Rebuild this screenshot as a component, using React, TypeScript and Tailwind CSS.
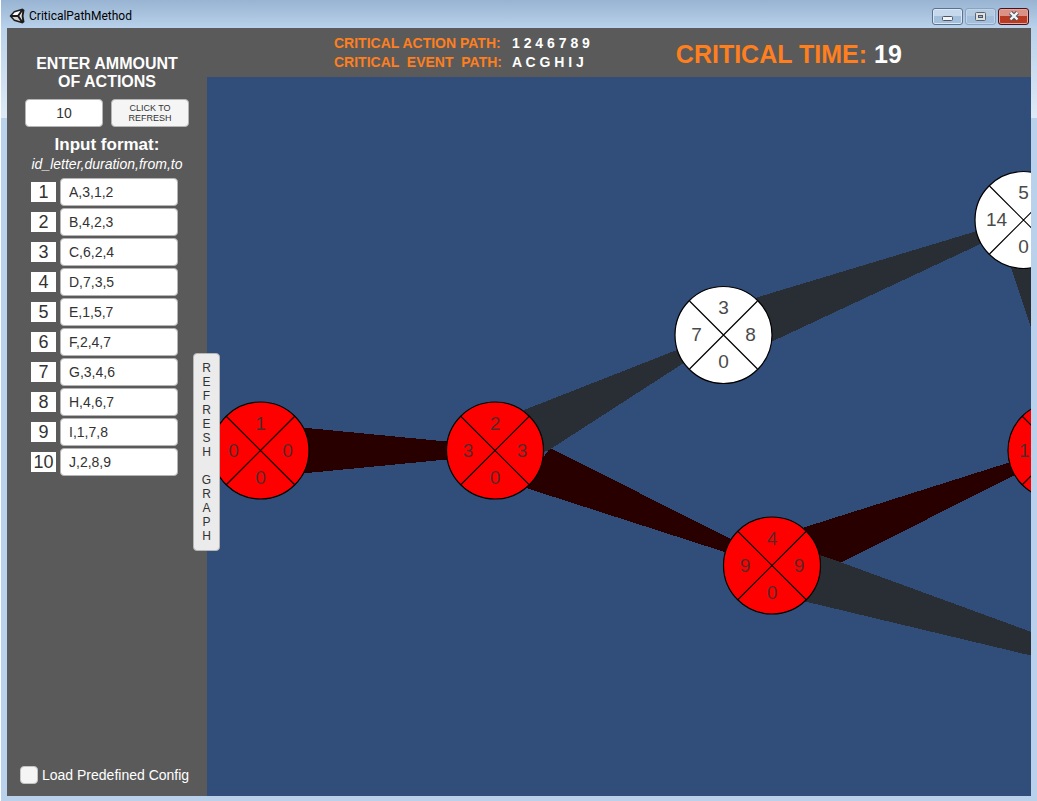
import React from "react";

type GraphNode = {
  id?: number;
  x: number;
  y: number;
  early: number;
  late?: number;
  slack?: number;
  critical: boolean;
};

const ACTIONS = [
  "A,3,1,2",
  "B,4,2,3",
  "C,6,2,4",
  "D,7,3,5",
  "E,1,5,7",
  "F,2,4,7",
  "G,3,4,6",
  "H,4,6,7",
  "I,1,7,8",
  "J,2,8,9",
];

const NODES: GraphNode[] = [
  { id: 1, x: 53.5, y: 373.5, early: 0, late: 0, slack: 0, critical: true },
  { id: 2, x: 288, y: 373.5, early: 3, late: 3, slack: 0, critical: true },
  { id: 3, x: 516.5, y: 258, early: 7, late: 8, slack: 0, critical: false },
  { id: 4, x: 565, y: 488.5, early: 9, late: 9, slack: 0, critical: true },
  { id: 5, x: 816.5, y: 143, early: 14, slack: 0, critical: false },
  { x: 849.5, y: 373.5, early: 12, critical: true },
];

const EDGES = [
  { points: "90,350 245,365 245,382 90,397", critical: true },
  { points: "343,371 530,465 530,479 316,410", critical: true },
  { points: "317,333 480,269 486,280 342,373 336,375", critical: false },
  { points: "548,221 780,151 782,163 564,265", critical: false },
  { points: "592,452 810,383 812,396 633,486 613,480", critical: true },
  { points: "610,477 633,485 830,557 830,580 596,524", critical: false },
  { points: "803,188 824,250 840,250 840,188", critical: false },
];

function EventNode({ node }: { node: GraphNode }) {
  const labels = [
    { dx: 0, dy: -27, value: node.id },
    { dx: -27, dy: 0, value: node.early },
    { dx: 27, dy: 0, value: node.late },
    { dx: 0, dy: 27, value: node.slack },
  ].filter((l) => l.value !== undefined);
  return (
    <g transform={`translate(${node.x} ${node.y})`}>
      <circle r="48.5" className={node.critical ? "fill-[#ff0000]" : "fill-white"} stroke="#000" strokeWidth="1.2" />
      <path d="M-34-34 34 34M34-34-34 34" stroke="#000" strokeWidth="1.2" />
      {labels.map((l, i) => (
        <text
          key={i}
          x={l.dx}
          y={l.dy + 6}
          textAnchor="middle"
          className={node.critical ? "fill-[#323232]/85 text-[19px]" : "fill-[#4a4a4a] text-[19px]"}
        >
          {l.value}
        </text>
      ))}
    </g>
  );
}

function TitleBar() {
  return (
    <header className="flex h-7 items-center justify-between bg-linear-to-b from-[#98b4d2] to-[#b9d1ea] px-2 pt-1">
      <div className="flex items-center gap-1">
        <svg width="16" height="16" viewBox="0 0 16 16" aria-hidden="true">
          <path d="M0.5 8 5 3 13.5 0.5 15.5 2 14.5 8 15.5 14 13.5 15.5 5 13Z" fill="#1c1c1c" />
          <path d="M5.5 4.6 11.5 2.8 8.6 7H3.4Z" fill="#fff" />
          <path d="M3.4 9H8.6L11.5 13.2 5.5 11.4Z" fill="#d4d4d4" />
          <path d="M13.3 3.6 12.6 8 13.3 12.4 10.3 8Z" fill="#e8e8e8" />
        </svg>
        <h1 className="font-[Roboto,sans-serif] text-[12px] leading-4 text-black">CriticalPathMethod</h1>
      </div>
      <div className="flex gap-0.5">
        <button
          type="button"
          aria-label="Minimize"
          className="flex h-[17px] w-[31px] items-center justify-center rounded-[3px] border border-[#5b7190] bg-linear-to-b from-[#c6d8ec] from-50% to-[#a4bfdb] to-50% inset-shadow-[0_0_0_1px_#dbe7f4]"
        >
          <svg width="11" height="5" viewBox="0 0 11 5" className="mt-1">
            <rect x="0.5" y="0.5" width="10" height="4" rx="1" fill="#f4f4f4" stroke="#4d5666" />
          </svg>
        </button>
        <button
          type="button"
          aria-label="Maximize"
          className="flex h-[17px] w-[31px] items-center justify-center rounded-[3px] border border-[#8aa3c1] bg-linear-to-b from-[#b4cae1] from-50% to-[#a4bfdb] to-50% inset-shadow-[0_0_0_1px_#c0d4ea]"
        >
          <svg width="11" height="9" viewBox="0 0 11 9">
            <rect x="0.5" y="0.5" width="10" height="8" rx="1" fill="#e0e0dc" stroke="#5a6474" />
            <rect x="3.5" y="3.5" width="4" height="2" fill="#8fb0d8" stroke="#4d5666" />
          </svg>
        </button>
        <button
          type="button"
          aria-label="Close"
          className="flex h-[17px] w-[31px] items-center justify-center rounded-[3px] border border-[#47121c] bg-linear-to-b from-[#dc9186] from-50% to-[#b93a22] to-50% inset-shadow-[0_0_0_1px_#e5a79c]"
        >
          <svg width="12" height="10" viewBox="0 0 12 10">
            <path d="M2.5 1.5 9.5 8.5M9.5 1.5 2.5 8.5" stroke="#4d5666" strokeWidth="4.4" />
            <path d="M2.5 1.5 9.5 8.5M9.5 1.5 2.5 8.5" stroke="#f4f4f4" strokeWidth="2.4" />
          </svg>
        </button>
      </div>
    </header>
  );
}

function Sidebar() {
  return (
    <aside className="flex w-[200px] shrink-0 flex-col bg-[#5a5a5a] pt-[27px] text-white">
      <label htmlFor="amount" className="text-center text-[16px] leading-[18px] font-bold">
        ENTER AMMOUNT
        <br />
        OF ACTIONS
      </label>
      <div className="mt-2 flex gap-2 px-[18px]">
        <input
          id="amount"
          type="text"
          defaultValue="10"
          className="h-7 w-0 flex-1 rounded-[4px] border border-[#b5b5b5] bg-white text-center text-[14px] text-[#323232]"
        />
        <button
          type="button"
          className="h-7 flex-1 rounded-[4px] border border-[#b5b5b5] bg-[#f5f5f5] text-[9px] leading-[10px] text-[#323232]"
        >
          CLICK TO
          <br />
          REFRESH
        </button>
      </div>
      <h2 className="mt-2 text-center text-[17px] leading-5 font-bold">Input format:</h2>
      <p className="text-center text-[14px] leading-[18px] italic">id_letter,duration,from,to</p>
      <ul className="mt-[5px] flex flex-col gap-0.5 pr-[29px] pl-6">
        {ACTIONS.map((action, i) => (
          <li key={action} className="flex items-center gap-1">
            <label
              htmlFor={`action-${i + 1}`}
              className="h-5 w-[25px] bg-white text-center text-[18px] leading-5 text-[#323232]"
            >
              {i + 1}
            </label>
            <input
              id={`action-${i + 1}`}
              type="text"
              defaultValue={action}
              className="h-7 w-0 flex-1 rounded-[4px] border border-[#b5b5b5] bg-white px-2 text-[14px] text-[#323232]"
            />
          </li>
        ))}
      </ul>
      <label className="mt-auto mb-3 ml-[13px] flex items-center gap-1 text-[14px] leading-[18px]">
        <input
          type="checkbox"
          className="size-[18px] appearance-none rounded-[4px] border border-[#c4c4c4] bg-[#f5f5f5] checked:bg-[#ff7f1e]"
        />
        Load Predefined Config
      </label>
    </aside>
  );
}

function Summary() {
  return (
    <div className="flex h-[49px] shrink-0 items-center gap-[86px] bg-[#5a5a5a] pt-px pl-[127px] font-bold text-white">
      <dl className="grid grid-cols-[auto_auto] gap-x-2.5 text-[14px] leading-[19px] whitespace-pre">
        <dt className="text-[#ff7f1e]">CRITICAL ACTION PATH:</dt>
        <dd>1 2 4 6 7 8 9</dd>
        <dt className="text-[#ff7f1e]">{"CRITICAL  EVENT  PATH:"}</dt>
        <dd>A C G H I J</dd>
      </dl>
      <p className="pt-0.5 text-[25px] leading-7 whitespace-nowrap">
        <span className="text-[#ff7f1e]">CRITICAL TIME:</span> 19
      </p>
    </div>
  );
}

function Graph() {
  return (
    <section className="relative flex-1 bg-[#314d79]">
      <svg className="absolute inset-0 size-full" role="img" aria-label="Event graph">
        <g shapeRendering="crispEdges">
          {EDGES.map((e) => (
            <polygon key={e.points} points={e.points} className={e.critical ? "fill-[#280000]" : "fill-[#292e34]"} />
          ))}
        </g>
        {NODES.map((n) => (
          <EventNode key={`${n.x}-${n.y}`} node={n} />
        ))}
      </svg>
      <button
        type="button"
        aria-label="Refresh graph"
        className="absolute top-[276px] -left-3.5 flex w-[27px] flex-col items-center rounded-[4px] border border-[#b5b5b5] bg-[#ebebeb] py-[7px] text-[12px] leading-[14px] text-[#323232]"
      >
        {"REFRESH GRAPH".split("").map((c, i) => (
          <span key={i} className="h-3.5">
            {c}
          </span>
        ))}
      </button>
    </section>
  );
}

export default function App() {
  return (
    <div className="flex min-h-screen flex-col border-l border-white bg-[#b9d1ea] font-['Liberation_Sans',Arial,sans-serif]">
      <TitleBar />
      <div className="flex flex-1 bg-linear-to-b from-[#b9d1ea] to-[#dfeaf6] bg-[length:100%_90px] bg-no-repeat pr-1.5 pb-[5px] pl-1.5">
        <Sidebar />
        <main className="flex min-w-0 flex-1 flex-col">
          <Summary />
          <Graph />
        </main>
      </div>
    </div>
  );
}
